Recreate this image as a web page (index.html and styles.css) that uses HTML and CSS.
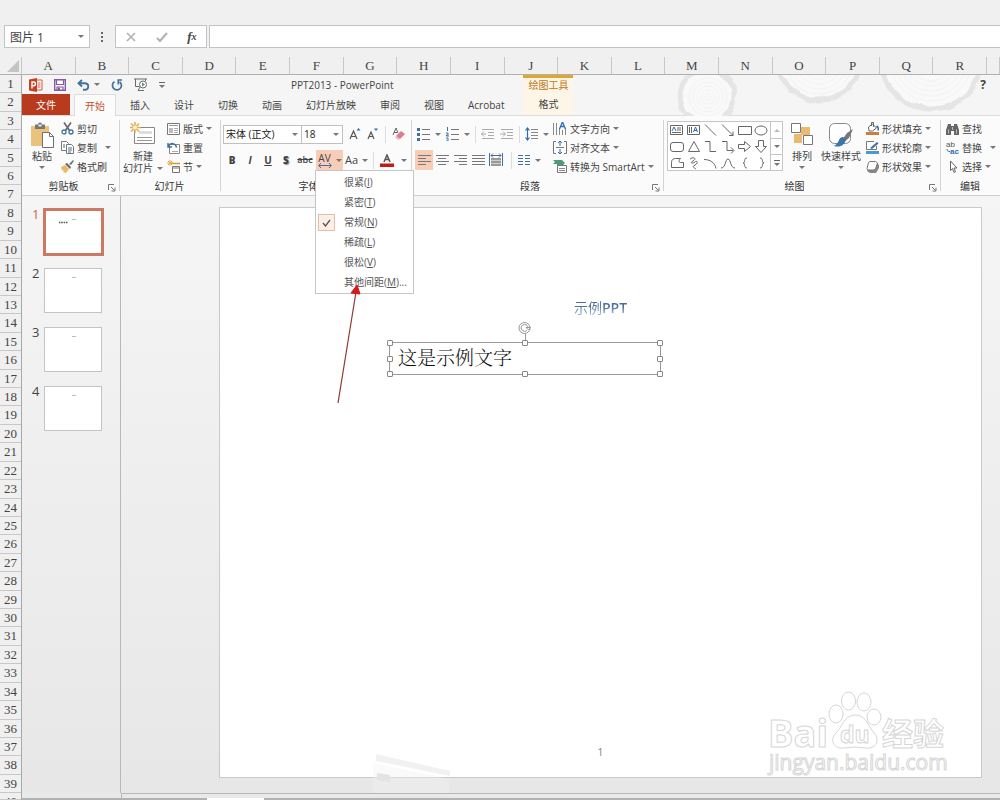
FILE: index.html
```html
<!DOCTYPE html>
<html lang="zh-CN">
<head>
<meta charset="utf-8">
<title>PPT2013 - PowerPoint</title>
<link rel="stylesheet" href="styles.css">
</head>
<body>
<div class="formula-bar">
  <div class="name-box">
    <input type="text" value="图片 1" aria-label="名称框">
    <button type="button" aria-label="名称列表"><span class="caret"></span></button>
  </div>
  <svg class="dots" width="4" height="12" viewBox="0 0 4 12"><path d="M1 1h2v2H1zM1 5h2v2H1zM1 9h2v2H1z" fill="#666"/></svg>
  <div class="fx-box">
    <button type="button" aria-label="取消"><svg width="12" height="12" viewBox="0 0 12 12"><path d="M2 2l8 8M10 2l-8 8" stroke="#b0b0b0" stroke-width="1.6"/></svg></button>
    <button type="button" aria-label="输入"><svg width="12" height="12" viewBox="0 0 12 12"><path d="M1 7l3 3 7-8" stroke="#b0b0b0" stroke-width="2" fill="none"/></svg></button>
    <button type="button" class="fx">f<small>x</small></button>
  </div>
  <input class="formula" type="text" aria-label="编辑栏">
</div>

<div class="sheet">
  <div class="corner"><svg width="13" height="13" viewBox="0 0 13 13"><path d="M13 1v12H1z" fill="#c4c4c4"/></svg></div>
  <div class="cols">
    <span>A</span><span>B</span><span>C</span><span>D</span><span>E</span><span>F</span><span>G</span><span>H</span><span>I</span><span>J</span><span>K</span><span>L</span><span>M</span><span>N</span><span>O</span><span>P</span><span>Q</span><span>R</span><span></span>
  </div>
  <div class="rows">
    <span>1</span><span>2</span><span>3</span><span>4</span><span>5</span><span>6</span><span>7</span><span>8</span><span>9</span><span>10</span><span>11</span><span>12</span><span>13</span><span>14</span><span>15</span><span>16</span><span>17</span><span>18</span><span>19</span><span>20</span><span>21</span><span>22</span><span>23</span><span>24</span><span>25</span><span>26</span><span>27</span><span>28</span><span>29</span><span>30</span><span>31</span><span>32</span><span>33</span><span>34</span><span>35</span><span>36</span><span>37</span><span>38</span><span>39</span><span>40</span>
  </div>

  <div class="app">
    <header class="head">
      <svg class="wood" width="330" height="41" viewBox="670 75 330 41" aria-hidden="true">
        <defs>
          <filter id="rough" x="-10%" y="-10%" width="120%" height="120%"><feTurbulence type="fractalNoise" baseFrequency="0.07" numOctaves="2" seed="4"/><feDisplacementMap in="SourceGraphic" scale="7" xChannelSelector="R" yChannelSelector="G"/></filter>
        </defs>
        <g fill="#f9f9f9" stroke="#e5e5e5" stroke-width="5" filter="url(#rough)">
          <circle cx="707" cy="96" r="27"/><circle cx="819" cy="59" r="41"/><circle cx="931" cy="59" r="50"/>
        </g>
        <g fill="none" stroke="#f3f3f3" stroke-width="1">
          <circle cx="708" cy="97" r="19"/><circle cx="708" cy="97" r="15"/><circle cx="708" cy="97" r="11"/><circle cx="708" cy="97" r="7"/><circle cx="708" cy="97" r="3"/>
          <circle cx="819" cy="60" r="34"/><circle cx="819" cy="60" r="29"/><circle cx="819" cy="60" r="24"/><circle cx="819" cy="60" r="19"/>
          <circle cx="931" cy="60" r="41"/><circle cx="931" cy="60" r="36"/><circle cx="931" cy="60" r="31"/><circle cx="931" cy="60" r="26"/><circle cx="931" cy="60" r="21"/>
        </g>
      </svg>
      <div class="title-row">
        <div class="qat">
          <svg width="14" height="14" viewBox="0 0 14 14"><path d="M7 2h6v10H7z" fill="#fff" stroke="#cf5a3c"/><path d="M8.500 5h3M8.500 7h3M8.500 9h3" stroke="#cf5a3c"/><path d="M0 1.500L8 0v14l-8-1.500z" fill="#c8401f"/><path d="M3 10.500V4h1.600a1.800 1.800 0 010 3.700H3" fill="none" stroke="#fff" stroke-width="1.400"/></svg>
          <button type="button" aria-label="保存"><svg width="12" height="12" viewBox="0 0 12 12"><path d="M.7.700h10.600v10.600H.7z" fill="#fff" stroke="#8559a5" stroke-width="1.400"/><path d="M2.500 1v4.500h7V1M3 11V8h6v3" fill="none" stroke="#8559a5" stroke-width="1.200"/><path d="M4 8.500h2V11H4z" fill="#8559a5"/></svg></button>
          <button type="button" aria-label="撤消" class="undo"><svg width="13" height="12" viewBox="0 0 13 12"><path d="M5 1L1.500 4.200 5 7.500M2 4.200h5.500c5 0 5 6.500 0 6.500H6" fill="none" stroke="#41719c" stroke-width="1.900"/></svg><span class="caret"></span></button>
          <button type="button" aria-label="重复"><svg width="12" height="12" viewBox="0 0 12 12"><path d="M3.500 2.600a4.500 4.500 0 105.200.2M6.500 1H11M7.300 1v4.500" fill="none" stroke="#41719c" stroke-width="1.700"/></svg></button>
          <button type="button" aria-label="放映"><svg width="14" height="13" viewBox="0 0 14 13"><path d="M0 1h13M1.500 1v7.500h4M6 9l-2 3.500M4 12.500h6M11.500 1v2" fill="none" stroke="#6a6a6a"/><circle cx="9" cy="6.500" r="3.500" fill="#fff" stroke="#6a6a6a"/><path d="M8 4.500l3 2-3 2z" fill="#5b8f6e"/></svg></button>
          <button type="button" aria-label="自定义" class="qmore"><i></i><span class="caret"></span></button>
        </div>
        <h1>PPT2013 - PowerPoint</h1>
      </div>
      <nav class="tabs">
        <button type="button" class="file">文件</button><button type="button" class="current">开始</button><button type="button">插入</button><button type="button">设计</button><button type="button">切换</button><button type="button">动画</button><button type="button">幻灯片放映</button><button type="button">审阅</button><button type="button">视图</button><button type="button">Acrobat</button>
      </nav>
      <div class="context"><span>绘图工具</span><button type="button">格式</button></div>
      <button type="button" class="help" aria-label="帮助">?</button>
    </header>

    <div class="ribbon">
      <section class="group clip">
        <div class="body">
          <button type="button" class="big"><svg width="26" height="26" viewBox="0 0 26 26"><path d="M2 4h18v20H2z" fill="#eac27c"/><path d="M6 2.500h3a2 2 0 014 0h3V7H6z" fill="#777"/><path d="M9.500 2.500h3v2h-3z" fill="#eee"/><path d="M13.500 10.500h7l4 4v11h-11z" fill="#fff" stroke="#6f6f6f"/><path d="M20.500 10.500v4h4" fill="none" stroke="#6f6f6f"/></svg><span>粘贴</span><span class="caret"></span></button>
          <div class="stack">
            <button type="button"><svg width="13" height="13" viewBox="0 0 13 13"><path d="M3 .5l5.500 8M10 .5l-5.500 8" stroke="#666" stroke-width="1.600"/><circle cx="3" cy="10" r="2" fill="none" stroke="#41719c" stroke-width="1.300"/><circle cx="10" cy="10" r="2" fill="none" stroke="#41719c" stroke-width="1.300"/></svg>剪切</button>
            <button type="button" class="wide"><svg width="13" height="13" viewBox="0 0 13 13"><path d="M.5.500h5l2 2v7h-7z" fill="#fff" stroke="#777"/><path d="M5.500 3.500h5l2 2v7h-7z" fill="#fff" stroke="#777"/><path d="M2 4h2M2 6h2M7 7h4M7 9h4M7 11h3" stroke="#41719c"/></svg>复制<span class="caret"></span></button>
            <button type="button"><svg width="13" height="13" viewBox="0 0 13 13"><path d="M0 7l4-2 4 4-3 4-3-1 1-2-2 .5z" fill="#e7b868"/><path d="M4 4l2-1 4 4-1 2z" fill="#666"/><path d="M8 4l4-4 1 1-3 4z" fill="#777"/></svg>格式刷</button>
          </div>
        </div>
        <footer>剪贴板<svg class="launch" width="8" height="8" viewBox="0 0 8 8"><path d="M.5 6V.5H6M3 3l3.500 3.500M7 3.500V7H3.500" fill="none" stroke="#777"/></svg></footer>
      </section>

      <section class="group slides">
        <div class="body">
          <button type="button" class="big"><svg width="26" height="26" viewBox="0 0 26 26"><path d="M4.500 5.500h20v16h-20z" fill="#fff" stroke="#888"/><path d="M9 9h13v3H9z" fill="#ddd"/><path d="M7 15.500h15M7 18.500h15" stroke="#999"/><path d="M5 0v11M0 5.500h11M1 1.500l8 8M9 1.500l-8 8" stroke="#e3ad50" stroke-width="1.500"/><circle cx="5" cy="5.500" r="2" fill="#fff2d5"/></svg><span>新建</span><span class="row">幻灯片<i class="caret"></i></span></button>
          <div class="stack">
            <button type="button"><svg width="13" height="12" viewBox="0 0 13 12"><path d="M.5.500h12v11H.5z" fill="#fff" stroke="#777"/><path d="M2 2.500h9" stroke="#999"/><path d="M2 5h4v5H2z" fill="#bbb"/><path d="M7 5.500h4M7 7.500h4M7 9.500h4" stroke="#aaa"/></svg>版式<span class="caret"></span></button>
            <button type="button"><svg width="13" height="12" viewBox="0 0 13 12"><path d="M2.500 2.500h10v9h-10z" fill="#fff" stroke="#888"/><path d="M5 9.500h6" stroke="#aaa"/><path d="M1 1v4h4M1.500 4.500c2-4 7-4 8 1" fill="none" stroke="#41719c" stroke-width="1.500"/></svg>重置</button>
            <button type="button"><svg width="13" height="13" viewBox="0 0 13 13"><path d="M4 3.500h9" stroke="#d8942c" stroke-width="1.500"/><path d="M5.500 6.500h7v6h-7z" fill="#fff" stroke="#777"/><path d="M6 7h6v2H6z" fill="#bbb"/><path d="M3 0v6M0 3h6M1 1l4 4M5 1L1 5" stroke="#e3ad50"/></svg>节<span class="caret"></span></button>
          </div>
        </div>
        <footer>幻灯片</footer>
      </section>

      <section class="group font">
        <div class="body lines">
          <div class="line">
            <span class="pick family"><select aria-label="字体"><option>宋体 (正文)</option></select><span class="caret"></span></span><span class="pick size"><select aria-label="字号"><option>18</option></select><span class="caret"></span></span>
            <button type="button" class="tool grow" aria-label="增大字号"><svg width="12" height="14" viewBox="0 0 12 14"><path d="M1 12L4.500 4 8 12M2.500 9.500h4" fill="none" stroke="#555" stroke-width="1.200"/><path d="M7.500 3.500L9.500 1l2 2.500z" fill="#2f6db0"/></svg></button>
            <button type="button" class="tool" aria-label="减小字号"><svg width="12" height="14" viewBox="0 0 12 14"><path d="M1 12l3-7 3 7M2 9.500h4" fill="none" stroke="#555" stroke-width="1.200"/><path d="M7 1.500L9 4l2-2.500z" fill="#2f6db0"/></svg></button>
            <i class="sep"></i>
            <button type="button" class="tool" aria-label="清除格式"><svg width="13" height="14" viewBox="0 0 13 14"><path d="M1 8l3-7 2 5M2 5.500h3" fill="none" stroke="#666"/><path d="M4 9l5-5 4 3-5 5z" fill="#d77f92"/><path d="M4 9l4 3-1.500 1L3 10.500z" fill="#eab9c2"/></svg></button>
          </div>
          <div class="line second">
            <button type="button" class="tool glyph"><b>B</b></button><button type="button" class="tool glyph"><em>I</em></button><button type="button" class="tool glyph"><u>U</u></button><button type="button" class="tool glyph shadow"><b>S</b></button><button type="button" class="tool glyph strike"><s>abc</s></button>
            <div class="spacing">
              <button type="button" class="tool on av" aria-expanded="true"><span>AV<svg width="14" height="5" viewBox="0 0 14 5"><path d="M3 0L.7 2.500 3 5M11 0l2.300 2.500L11 5M1 2.500h12" fill="none" stroke="#3f6cb0"/></svg></span><i class="caret"></i></button>
              <div class="menu" role="menu">
                <button type="button" role="menuitem">很紧(<u>I</u>)</button>
                <button type="button" role="menuitem">紧密(<u>T</u>)</button>
                <button type="button" role="menuitem"><span class="tick"><svg width="9" height="8" viewBox="0 0 9 8"><path d="M1 4l2.500 3L8 1" fill="none" stroke="#555" stroke-width="1.300"/></svg></span>常规(<u>N</u>)</button>
                <button type="button" role="menuitem">稀疏(<u>L</u>)</button>
                <button type="button" role="menuitem">很松(<u>V</u>)</button>
                <button type="button" role="menuitem">其他间距(<u>M</u>)...</button>
              </div>
            </div>
            <button type="button" class="tool aa">Aa<span class="caret"></span></button>
            <i class="sep"></i>
            <button type="button" class="tool color" aria-label="字体颜色"><svg width="14" height="13" viewBox="0 0 14 13"><path d="M4 8l3-7 3 7M5 5.500h4" fill="none" stroke="#555" stroke-width="1.500"/><path d="M0 9.500h14V13H0z" fill="#c3191b"/></svg><span class="caret"></span></button>
          </div>
        </div>
        <footer>字体</footer>
      </section>

      <section class="group para">
        <div class="body">
          <div class="lines">
            <div class="line">
              <button type="button" class="tool dd" aria-label="项目符号"><svg width="13" height="14" viewBox="0 0 13 14"><path d="M5 2.500h8M5 7.500h8M5 12.500h8" stroke="#777"/><path d="M0 1h3v3H0zM0 6h3v3H0zM0 11h3v3H0z" fill="#41719c"/></svg><span class="caret"></span></button>
              <button type="button" class="tool dd" aria-label="编号"><svg width="13" height="14" viewBox="0 0 13 14"><path d="M5 2.500h8M5 7.500h8M5 12.500h8" stroke="#777"/><path d="M1.500 0v4M0 6h2v2H.5v1H3M0 11h2v3H0" fill="none" stroke="#41719c"/></svg><span class="caret"></span></button>
              <i class="sep"></i>
              <button type="button" class="tool" aria-label="减少缩进"><svg width="14" height="11" viewBox="0 0 14 11"><path d="M1 .5h12M7 3.500h6M7 6.500h6M1 9.500h12M0 5h5M3 2.500L.5 5 3 7.500" fill="none" stroke="#aaa"/></svg></button>
              <button type="button" class="tool" aria-label="增加缩进"><svg width="14" height="11" viewBox="0 0 14 11"><path d="M1 .5h12M7 3.500h6M7 6.500h6M1 9.500h12M0 5h5M3 2.500L5.500 5 3 7.500" fill="none" stroke="#aaa"/></svg></button>
              <i class="sep"></i>
              <button type="button" class="tool dd" aria-label="行距"><svg width="13" height="14" viewBox="0 0 13 14"><path d="M6 2.500h7M6 5.500h7M6 8.500h7M6 11.500h7" stroke="#888"/><path d="M2.500 1v12M.5 3.500l2-2.500 2 2.500M.5 10.500l2 2.500 2-2.500" fill="none" stroke="#2f6db0" stroke-width="1.200"/></svg><span class="caret"></span></button>
            </div>
            <div class="line second">
              <button type="button" class="tool al on" aria-label="左对齐"><svg width="13" height="10" viewBox="0 0 13 10"><path d="M0 .5h13M0 3.500h8M0 6.500h13M0 9.500h8" stroke="#777"/></svg></button>
              <button type="button" class="tool al" aria-label="居中"><svg width="13" height="10" viewBox="0 0 13 10"><path d="M0 .5h13M2 3.500h8M0 6.500h13M2 9.500h8" stroke="#777"/></svg></button>
              <button type="button" class="tool al" aria-label="右对齐"><svg width="13" height="10" viewBox="0 0 13 10"><path d="M0 .5h13M5 3.500h8M0 6.500h13M5 9.500h8" stroke="#777"/></svg></button>
              <button type="button" class="tool al" aria-label="两端对齐"><svg width="13" height="10" viewBox="0 0 13 10"><path d="M0 .5h13M0 3.500h13M0 6.500h13M0 9.500h13" stroke="#777"/></svg></button>
              <button type="button" class="tool al" aria-label="分散对齐"><svg width="14" height="14" viewBox="0 0 14 14"><path d="M.5 0v13M13.500 0v13M2 2.500h10M4 .5l-2 2 2 2M10 .5l2 2-2 2" fill="none" stroke="#41719c"/><path d="M2 5h10v8H2z" fill="#9a9a9a"/><path d="M2 7.500h10M2 10.500h10" stroke="#ccc"/></svg></button>
              <i class="sep"></i>
              <button type="button" class="tool dd" aria-label="分栏"><svg width="12" height="10" viewBox="0 0 12 10"><path d="M0 .5h5M0 3.500h5M0 6.500h5M0 9.500h5M7 .5h5M7 3.500h5M7 6.500h5M7 9.500h5" stroke="#41719c"/></svg><span class="caret"></span></button>
            </div>
          </div>
          <div class="stack">
            <button type="button"><svg width="14" height="14" viewBox="0 0 14 14"><path d="M.5 1v12M3.500 1v12M6.500 6v7M9.500 8v5M12.500 6v7" stroke="#888"/><path d="M6.500 7L9.500 0l3 7M7.500 4.500h4" fill="none" stroke="#2f6db0" stroke-width="1.300"/></svg>文字方向<span class="caret"></span></button>
            <button type="button"><svg width="14" height="13" viewBox="0 0 14 13"><path d="M3 .5H.5v12H3M11 .5h2.500v12H11M3 6.500h8" fill="none" stroke="#777"/><path d="M7 0v5M5 2l2-2 2 2M7 13V8M5 11l2 2 2-2" fill="none" stroke="#2f6db0"/></svg>对齐文本<span class="caret"></span></button>
            <button type="button"><svg width="14" height="13" viewBox="0 0 14 13"><path d="M0 0h9l3 3-2 2H8L6 7 4 6V4H0l2-2z" fill="#4f9a78"/><path d="M4.500 5.500h9v7h-9z" fill="#fff" stroke="#777"/><path d="M6 8.500h6M6 10.500h6" stroke="#888"/></svg>转换为 SmartArt<span class="caret"></span></button>
          </div>
        </div>
        <footer>段落<svg class="launch" width="8" height="8" viewBox="0 0 8 8"><path d="M.5 6V.5H6M3 3l3.500 3.500M7 3.500V7H3.500" fill="none" stroke="#777"/></svg></footer>
      </section>

      <section class="group draw">
        <div class="body">
          <div class="gallery">
            <svg width="102" height="48" viewBox="0 0 102 48" fill="none" stroke="#666">
              <path d="M2.500 3.500h12v9h-12zM9 6h4M9 8h4M4 10.500h9M19.500 3.500h12v9h-12zM21.500 5v6M23.500 5v6"/>
              <path d="M4 9l2-4 2 4M25.500 10l2-5 2 5M26 8.500h3" stroke="#2f6db0"/>
              <path d="M37 2.500l11 11M54 2.500l11 11M65 9.500v4h-4M70.500 4.500h13v8h-13z"/><ellipse cx="93" cy="8.500" rx="6" ry="4.500"/>
              <rect x="2.500" y="20.500" width="13" height="9" rx="2.500"/><path d="M26 19.500l5.500 10h-11zM37 19.500h5v10h6M54 19.500h5v9h6M63 25.500l3 3-3 3M70.500 22.500h6v-3l6 5-6 5v-3h-6zM90.500 18.500h5v6h3l-5.500 6-5.500-6h3z"/>
              <path d="M3.500 45.500v-5c0-3 2-4 4-4h5c-2 2-2 4 0 4h3v5zM22 37c4-3 7 0 3 2s0 3 2 1 4 1 0 3 0 3 1 4M36 37.500c6 0 11 3 12 9M53 46c5 0 4-9 7-9s2 9 7 9M79 36c-4 0-1 5-4 5 3 0 0 5 4 5M92 36c4 0 1 5 4 5-3 0 0 5-4 5"/>
            </svg>
            <div class="scroll"><button type="button" aria-label="上"><span class="caret up"></span></button><button type="button" aria-label="下"><span class="caret"></span></button><button type="button" aria-label="更多" class="qmore"><i></i><span class="caret"></span></button></div>
          </div>
          <button type="button" class="big"><svg width="24" height="26" viewBox="0 0 24 26"><path d="M11 5h9v8h-8v8H4v-9h7z" fill="#eabb6e"/><path d="M1.500 1.500h9v9h-9zM13.500 13.500h9v9h-9z" fill="#fff" stroke="#777"/></svg><span>排列</span><span class="caret"></span></button>
          <button type="button" class="big styles"><svg width="28" height="26" viewBox="0 0 28 26"><rect x="2.500" y="1.500" width="21" height="20" rx="5" fill="#fff" stroke="#888"/><path d="M26 7l-4 9-5 4-2-2 5-7z" fill="#777"/><path d="M19 17l-3-2c-5 0-3 6-9 9 6 2 11-1 12-7z" fill="#3f74a8"/></svg><span>快速样式</span><span class="caret"></span></button>
          <div class="stack">
            <button type="button"><svg width="13" height="13" viewBox="0 0 13 13"><path d="M2.500 5l4-3 4 4-4 3H3zM5.500 4V.5h2V5" fill="#fff" stroke="#666"/><path d="M10.500 4c2 1 2 3 1.500 4.500" fill="none" stroke="#2f6db0" stroke-width="1.500"/><path d="M0 10h13v3H0z" fill="#d07c3c"/></svg>形状填充<span class="caret"></span></button>
            <button type="button"><svg width="13" height="13" viewBox="0 0 13 13"><path d="M8 .5H.5v8h10V5" fill="#fff" stroke="#777"/><path d="M4 7l7-6 1.500 1.500L6 8z" fill="#41719c"/><path d="M0 10h13v3H0z" fill="#4f97d0"/></svg>形状轮廓<span class="caret"></span></button>
            <button type="button"><svg width="13" height="12" viewBox="0 0 13 12"><path d="M2 7l-1 3 3 2h6l3-5V4l-2-2z" fill="#888"/><path d="M4 .5h5.500l2 1.500-2 6-1.500 1H2l-1-1.500 1.500-6z" fill="#fff" stroke="#777"/></svg>形状效果<span class="caret"></span></button>
          </div>
        </div>
        <footer>绘图<svg class="launch" width="8" height="8" viewBox="0 0 8 8"><path d="M.5 6V.5H6M3 3l3.500 3.500M7 3.500V7H3.500" fill="none" stroke="#777"/></svg></footer>
      </section>

      <section class="group edit">
        <div class="body">
          <div class="stack">
            <button type="button"><svg width="13" height="12" viewBox="0 0 13 12"><path d="M2 1h3v2h3V1h3l2 6v5H8V8H5v4H0V7z" fill="#666"/><path d="M2.500 6.500v4M10.500 6.500v4M6.500 4v3" stroke="#bbb"/></svg>查找</button>
            <button type="button" class="wide"><svg class="swap" width="13" height="14" viewBox="0 0 13 14"><text x="0" y="6" font-size="8" fill="#555">ab</text><text x="4" y="13" font-size="8" font-weight="bold" fill="#2f6db0">ac</text><path d="M1 8c0 2 1 2.500 3 2.500" fill="none" stroke="#2f6db0"/></svg>替换<span class="caret"></span></button>
            <button type="button"><svg width="13" height="13" viewBox="0 0 13 13"><path d="M4.500 1v9.500l2-2 1.500 4 1.500-.7L8 8h3z" fill="#fff" stroke="#666"/></svg>选择<span class="caret"></span></button>
          </div>
        </div>
        <footer>编辑</footer>
      </section>
    </div>

    <main class="work">
      <aside class="thumbs">
        <div class="thumb active"><span>1</span><div><svg width="56" height="20" viewBox="0 0 56 20"><path d="M14 11.500h9" stroke="#555" stroke-width="1.500" stroke-dasharray="1.500 .8"/><path d="M27 8.500h4" stroke="#bbb"/></svg></div></div>
        <div class="thumb"><span>2</span><div><svg width="56" height="20" viewBox="0 0 56 20"><path d="M27 8.500h4" stroke="#bbb"/></svg></div></div>
        <div class="thumb"><span>3</span><div><svg width="56" height="20" viewBox="0 0 56 20"><path d="M27 8.500h4" stroke="#bbb"/></svg></div></div>
        <div class="thumb"><span>4</span><div><svg width="56" height="20" viewBox="0 0 56 20"><path d="M27 8.500h4" stroke="#bbb"/></svg></div></div>
      </aside>
      <div class="stage">
        <div class="slide">
          <h2>示例<b>PPT</b></h2>
          <div class="textbox">
            这是示例文字
            <svg class="rotate" width="15" height="14" viewBox="0 0 15 14"><circle cx="6.500" cy="7" r="5.500" fill="#fff" stroke="#999"/><path d="M9 9.500a3.500 3.500 0 110-5.200q1 1 .8 2.700M8 6.500h4.500L10.500 9z" fill="none" stroke="#999"/></svg>
            <i class="h nw"></i><i class="h n"></i><i class="h ne"></i><i class="h w"></i><i class="h e"></i><i class="h sw"></i><i class="h s"></i><i class="h se"></i>
          </div>
          <span class="page">1</span>
          <svg class="watermark" width="190" height="90" viewBox="760 690 190 90" fill="#fff" stroke="#d6d6d6">
            <text x="767" y="748" font-size="38" font-weight="bold">Bai</text>
            <path d="M854 716c-11 0-13 13-20 19-6 8 1 15 8 14q12-2 23 0c9 1 14-6 9-14-7-7-8-19-20-19z"/>
            <ellipse cx="835" cy="715" rx="7" ry="9"/><ellipse cx="847.500" cy="702" rx="7" ry="9"/><ellipse cx="863" cy="703" rx="7" ry="9"/><ellipse cx="873" cy="718" rx="7" ry="8"/>
            <text x="839" y="744" font-size="23" font-weight="bold">du</text>
            <text x="881" y="746" font-size="31" font-weight="bold">经验</text>
            <text x="768" y="771" font-size="21">jingyan.baidu.com</text>
          </svg>
        </div>
        <svg class="ghost" width="84" height="46" viewBox="370 752 84 46"><path d="M376 755l74 17v5l-74-15z" fill="#f1f1f1"/><path d="M373 764l76 16v16h-76z" fill="#f3f3f3" opacity=".4"/><path d="M377 774l13 2v7l-13-2z" fill="#e3e3e3"/></svg>
      </div>
      <svg class="pointer" width="26" height="120" viewBox="0 0 26 120"><path d="M2 118L20 7" stroke="#8c3a32" stroke-width="1.200"/><path d="M21 0l3 9-9-1z" fill="#d5181b" stroke="#d5181b"/></svg>
    </main>
    <div class="status"><i></i></div>
  </div>
</div>
</body>
</html>
```
FILE: styles.css
```css
* { box-sizing: border-box; }
body {
  margin: 0;
  height: 100vh;
  display: flex;
  flex-direction: column;
  overflow: hidden;
  background: #f0f0f0;
  color: #444;
  font: 10px/12px "Open Sans", "Noto Sans CJK SC", sans-serif;
}
button, input, select { font: inherit; color: inherit; border: 0; padding: 0; margin: 0; background: none; border-radius: 0; }
button { display: flex; align-items: center; white-space: nowrap; flex: none; }
svg { display: block; flex: none; }
.caret { flex: none; border: 3px solid transparent; border-top-color: #777; border-bottom: 0; width: 0; height: 0; }
.caret.up { border-bottom: 3px solid #bbb; border-top: 0; }
.qmore { flex-direction: column; justify-content: center; gap: 2px; }
.qmore i { width: 6px; height: 1px; background: #666; }

/* Formula bar */
.formula-bar { display: flex; padding-top: 25px; height: 48px; flex: none; font-size: 12px; }
.name-box { display: flex; margin-left: 4px; width: 86px; background: #fff; border: 1px solid #c3c3c3; }
.name-box input { flex: 1; min-width: 0; padding-left: 5px; }
.name-box button { padding-right: 5px; }
.dots { align-self: center; margin: 0 11px 0 10px; }
.fx-box { display: flex; justify-content: space-around; width: 92px; background: #fff; border: 1px solid #c3c3c3; }
.fx { font: italic bold 13px "Liberation Serif", serif; }
.fx small { font-size: 10px; align-self: flex-end; margin-bottom: 5px; }
.formula { flex: 1; min-width: 0; margin-left: 2px; background: #fff; border: 1px solid #c3c3c3; border-right: 0; }

/* Worksheet frame */
.sheet { flex: 1; min-height: 0; display: grid; grid-template: 18px minmax(0, 1fr) / 22px minmax(0, 1fr); padding-top: 9px; }
.corner { display: flex; justify-content: flex-end; padding: 2px 3px 0 0; border-bottom: 1px solid #b0b0b0; }
.cols, .rows { display: grid; font: 13px/16px "Liberation Serif", serif; text-align: center; color: #444; }
.cols { grid-template-columns: repeat(18, minmax(0, 54fr)) minmax(0, 13fr); border-bottom: 1px solid #b0b0b0; margin-left: -1px; border-left: 1px solid #c8c8c8; }
.cols span { border-right: 1px solid #c8c8c8; padding-top: 1px; }
.rows { grid-template-rows: repeat(39, minmax(0, 46fr)) minmax(0, 17fr); border-right: 1px solid #a8a8a8; overflow: hidden; }
.rows span { border-bottom: 1px solid #c8c8c8; overflow: hidden; padding-top: 1px; }

/* Window header */
.app { display: flex; flex-direction: column; min-height: 0; background: #f5f5f5; }
.head { position: relative; flex: none; display: grid; grid-template: 19px 21px / auto 50px 1fr; column-gap: 7px; border-bottom: 1px solid #dcdcdc; }
.wood { position: absolute; right: 0; top: 0; }
.title-row { display: flex; align-items: center; justify-content: space-between; padding: 0 123px 0 7px; }
.title-row h1 { margin: 0; font: inherit; font-size: 10px; }
.qat { display: flex; align-items: center; gap: 11px; }
.undo { gap: 4px; }
.tabs { grid-row: 2; display: flex; }
.tabs button { padding: 0 12px; }
.tabs .file { background: #b83b1d; color: #fff; padding: 0 14px; margin-right: 4px; }
.tabs .current { background: #fbfbfb; color: #c0532f; padding: 0 10px; margin: 0 2px -1px 0; border: 1px solid #dcdcdc; border-bottom: 0; z-index: 1; }
.context { grid-area: 1 / 2 / 3 / 3; display: flex; flex-direction: column; align-items: center; background: #fdf6e7; border-top: 3px solid #e2a52e; color: #bd7620; }
.context span { line-height: 15px; }
.context button { flex: 1; color: #444; }
.help { grid-area: 1 / 3; justify-self: end; z-index: 1; padding-right: 14px; font-size: 12px; font-weight: bold; }

/* Ribbon */
.ribbon { flex: none; display: flex; min-height: 80px; background: #fbfbfb; border-bottom: 1px solid #cfcfcf; }
.group { display: flex; flex-direction: column; position: relative; min-width: 0; }
.group + .group::before { content: ""; position: absolute; left: 0; top: 4px; bottom: 4px; border-left: 1px solid #d4d4d4; }
.clip { flex: 97 0 97px; }
.slides { flex: 101 0 101px; }
.font { flex: 191 0 191px; }
.para { flex: 252 0 252px; }
.draw { flex: 277 0 277px; }
.edit { flex: 60 0 60px; }
.body { flex: 1; display: flex; align-items: flex-start; padding-top: 3px; }
.group footer { position: relative; height: 15px; text-align: center; padding-right: 14px; color: #333; }
.slides footer, .edit footer { padding-right: 0; }
.launch { position: absolute; right: 3px; bottom: 3px; }
.stack { display: flex; flex-direction: column; }
.stack button { height: 19px; gap: 3px; }
.stack .wide .caret { margin-left: 5px; }
.swap { overflow: visible; font-family: "Liberation Sans", sans-serif; }
.big { flex-direction: column; padding-top: 3px; }
.big span { line-height: 12px; }
.big svg { margin-bottom: 2px; }
.big > .caret { margin-top: 4px; }
.big .row { display: flex; align-items: center; gap: 4px; }
.clip .body { padding-left: 7px; }
.clip .stack { margin-left: 6px; }
.slides .body { padding-left: 4px; }
.slides .stack { margin-left: 4px; }
.edit .body { padding-left: 6px; }

.lines { display: flex; flex-direction: column; align-items: stretch; }
.line { display: flex; align-items: center; height: 20px; margin-top: 5px; }
.second { margin-top: 6px; }
.tool { height: 20px; justify-content: center; }
.sep { width: 1px; height: 17px; background: #dcdcdc; flex: none; }
.on { background: #f8cdb8; }
.font .body { padding: 3px 0 0 3px; }
.pick { display: flex; align-items: center; height: 19px; background: #fff; border: 1px solid #c0c0c0; padding-right: 3px; }
.pick select { appearance: none; flex: 1; min-width: 0; padding-left: 2px; color: #222; }
.family { width: 79px; }
.size { width: 42px; margin-left: -1px; }
.font .line .tool { margin-right: 6px; }
.font .line .grow { margin-left: 6px; }
.font .line .sep { margin-right: 6px; }
.font .second .glyph { width: 18px; margin: 0; font-weight: 700; }
.font .second .strike { width: 20px; font-weight: 600; }
.shadow { text-shadow: 1px 1px 1px #999; }
.strike s { font-size: 9px; }
.font .second .on { margin: 0; width: 27px; gap: 4px; }
.font .second .aa { margin: 0 5px 0 2px; gap: 4px; font-size: 11px; }
.font .second .color { margin: 0; gap: 7px; }
.av span { line-height: 10px; }
.spacing { position: relative; margin-left: 1px; }
.menu { position: absolute; z-index: 5; top: 100%; left: -1px; width: 99px; background: #fff; border: 1px solid #c6c6c6; padding: 1px 0; }
.menu button { position: relative; width: 100%; height: 20px; padding-left: 28px; color: #555; }
.tick { position: absolute; left: 2px; top: 2px; width: 17px; height: 17px; display: grid; place-items: center; background: #fdeee7; border: 1px solid #e3bda9; }

.para .lines { width: 142px; }
.para .line { gap: 5px; padding-left: 6px; }
.para .second { gap: 0; padding-left: 4px; }
.para .second .sep { margin: 0 6px; }
.dd { gap: 5px; }
.al { width: 18px; }

.gallery { display: flex; margin: 2px 0 0 4px; border: 1px solid #c6c6c6; background: #fff; }
.scroll { display: grid; grid-template-rows: repeat(3, 1fr); width: 12px; border-left: 1px solid #c6c6c6; }
.scroll button { justify-content: center; }
.scroll button + button { border-top: 1px solid #c6c6c6; }
.draw .big { margin-left: 7px; }
.draw .stack { margin-left: 5px; }

/* Workspace */
.work { position: relative; flex: 1; min-height: 0; display: flex; background: linear-gradient(#f5f5f5, #e7e7e7); }
.thumbs { flex: none; width: 99px; padding: 12px 0 0 10px; border-right: 1px solid #b8b8b8; display: flex; flex-direction: column; gap: 12px; }
.thumb { display: flex; gap: 4px; height: 47px; font-size: 13px; line-height: 13px; }
.thumb > span { width: 7px; }
.thumb > div { width: 58px; height: 45px; margin: 1px; background: #fff; border: 1px solid #c4c4c4; }
.thumb.active { color: #c9694c; }
.thumb.active > span { margin-right: 1px; }
.thumb.active > div { width: 61px; height: 48px; margin: 0 0 0 -1px; border: 3px solid #cb7a61; }
.thumb.active svg { margin-left: -1px; }
.stage { position: relative; flex: 1; display: flex; padding: 11px 18px 15px 98px; }
.slide { position: relative; flex: 1; display: flex; flex-direction: column; background: #fff; border: 1px solid #c9c9c9; }
.slide h2 { align-self: center; margin: 90px 0 0; font-size: 14px; line-height: 20px; font-weight: 400; background: linear-gradient(#4a6c99 40%, #93aecd 75%); background-clip: text; -webkit-text-fill-color: transparent; }
.slide h2 b { font-weight: 600; }
.textbox { position: relative; align-self: flex-start; width: 272px; height: 33px; margin: 24px 0 0 169px; padding-left: 8px; border: 1px solid #999; color: #111; font: 300 19px/31px "Liberation Serif", "Noto Serif CJK SC", "Noto Sans CJK SC", serif; }
.h { position: absolute; width: 6px; height: 6px; margin: -3px; background: #fff; border: 1px solid #888; border-radius: 1px; }
.nw, .n, .ne { top: 0; }
.w, .e { top: 50%; }
.sw, .s, .se { top: 100%; }
.nw, .w, .sw { left: 0; }
.n, .s { left: 50%; }
.ne, .e, .se { left: 100%; }
.rotate { position: absolute; left: 128px; top: -22px; }
.textbox::before { content: ""; position: absolute; left: 50%; top: -9px; height: 8px; border-left: 1px solid #999; }
.page { margin: auto auto 19px; color: #888; font-size: 11px; }
.watermark { position: absolute; right: 30px; bottom: -2px; font-family: "Open Sans", "Noto Sans CJK SC", sans-serif; }
.ghost { position: absolute; left: 249px; bottom: -4px; }
.pointer { position: absolute; left: 314px; top: 89px; z-index: 6; }
.status { position: relative; flex: none; display: flex; height: 7px; border-bottom: 2px solid #b0b3b1; background: #e9e9e9; }
.status::before { content: ""; width: 99px; border-right: 1px solid #b8b8b8; }
.status::after { content: ""; flex: 1; border-top: 1px solid #b5b8b6; }
.status i { position: absolute; left: 185px; bottom: -2px; width: 57px; height: 2px; background: #fff; }
```
